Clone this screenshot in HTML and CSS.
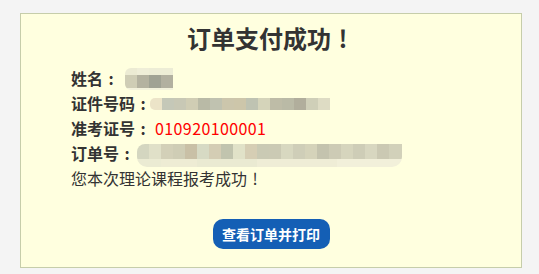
FILE: index.html
```html
<!DOCTYPE html>
<html lang="zh-CN">
<head>
<meta charset="utf-8">
<title>订单支付成功</title>
<link rel="stylesheet" href="styles.css">
</head>
<body>
<div class="panel">
  <h1 class="title">订单支付成功<span class="punct">!</span></h1>
  <div class="info">
    <div class="row"><span class="label">姓名<span class="punct">:</span></span><span class="mosaic mosaic-name"></span></div>
    <div class="row"><span class="label">证件号码<span class="punct">:</span></span><span class="mosaic mosaic-id"></span></div>
    <div class="row"><span class="label">准考证号<span class="punct">:</span></span><span class="ticket">010920100001</span></div>
    <div class="row"><span class="label">订单号<span class="punct">:</span></span><span class="mosaic mosaic-order"></span></div>
    <div class="row note">您本次理论课程报考成功<span class="punct">!</span></div>
  </div>
  <div class="actions">
    <a class="btn" href="#">查看订单并打印</a>
  </div>
</div>
</body>
</html>
```

FILE: styles.css
```css
html, body {
  margin: 0;
  padding: 0;
  background: #f4f4f4;
}
body {
  font-family: "Microsoft YaHei", "Noto Sans CJK SC", "Noto Sans", sans-serif;
  color: #333;
}
.punct {
  display: inline-block;
  width: 1em;
  text-align: center;
}
.panel {
  box-sizing: border-box;
  width: 502px;
  margin: 13px 0 0 20px;
  background: #ffffdf;
  border: 1px solid #c6cdaa;
  padding: 8px 0 18px 0;
}
.title {
  margin: 0;
  font-size: 24px;
  line-height: 32px;
  font-weight: bold;
  text-align: center;
  color: #333;
}
.info {
  margin-top: 12px;
  padding-left: 50px;
}
.row {
  display: flex;
  align-items: center;
  height: 25px;
  font-size: 16px;
  line-height: 25px;
}
.label {
  font-weight: bold;
  color: #333;
}
.ticket {
  color: #f00;
  margin-left: 4px;
  letter-spacing: 0.4px;
}
.note {
  font-weight: normal;
}
.mosaic {
  display: inline-block;
  filter: blur(0.5px);
}
.mosaic-name {
  width: 48px;
  height: 22px;
  margin-left: 6px;
  margin-top: 1px;
  border-radius: 6px 0 0 6px;
  background:
    linear-gradient(to right, #cfcdb5 0 12px, #b4b2a0 12px 24px, #a0a294 24px 36px, #b2b0a0 36px 48px) 0 7px / 48px 13px no-repeat,
    linear-gradient(to right, #ecebd3 0 12px, #efeed8 12px 24px, #ededd6 24px 48px) 0 0 / 48px 7px no-repeat,
    #f3f2dc;
}
.mosaic-id {
  width: 180px;
  height: 12px;
  margin-left: -1px;
  border-radius: 5px 0 0 5px;
  background: linear-gradient(to right,
    #ece4c8 0 12px, #c5c8b8 12px 24px, #c8c8b5 24px 36px, #d0cdb4 36px 48px,
    #b9baa6 48px 60px, #c0c2b0 60px 72px, #ccc6ac 72px 84px, #cdc6aa 84px 96px,
    #bfc3b2 96px 108px, #d5d4ba 108px 120px, #bebca7 120px 132px, #babaa6 132px 144px,
    #b1ae9c 144px 156px, #cfcfb8 156px 168px, #dedcc4 168px 180px);
}
.mosaic-order {
  width: 265px;
  height: 23px;
  margin-top: 4px;
  margin-left: 2px;
  border-radius: 8px 0 10px 10px;
  background:
    linear-gradient(to right,
      #d4d6c0 0 12px, #e0e0c8 12px 24px, #d3d0b8 24px 36px, #cfcdb5 36px 48px,
      #c9c0a6 48px 60px, #d7dac4 60px 72px, #d4cdb4 72px 84px, #c1c4ae 84px 96px,
      #e1e2c8 96px 108px, #d6ceb4 108px 120px, #cacab4 120px 132px, #cbcab4 132px 144px,
      #d8d8c0 144px 156px, #cfceb8 156px 168px, #d5d3ba 168px 180px, #c4c3ae 180px 192px,
      #cdcbb5 192px 204px, #d6d5bd 204px 216px, #cecdb7 216px 228px, #d8d7c0 228px 240px,
      #cbc9b3 240px 252px, #d2d1ba 252px 265px) 0 0 / 265px 15px no-repeat,
    linear-gradient(to right,
      #ebebd3 0 24px, #eeecd4 24px 60px, #eaead2 60px 120px, #efedd6 120px 200px, #f2f0da 200px 265px) 0 15px / 265px 8px no-repeat;
}
.actions {
  display: flex;
  justify-content: center;
  margin-top: 28px;
}
.btn {
  display: inline-block;
  box-sizing: border-box;
  width: 117px;
  height: 30px;
  line-height: 30px;
  border-radius: 10px;
  background: #145fb5;
  color: #fff;
  font-size: 14px;
  font-weight: bold;
  text-align: center;
  text-decoration: none;
}
```
